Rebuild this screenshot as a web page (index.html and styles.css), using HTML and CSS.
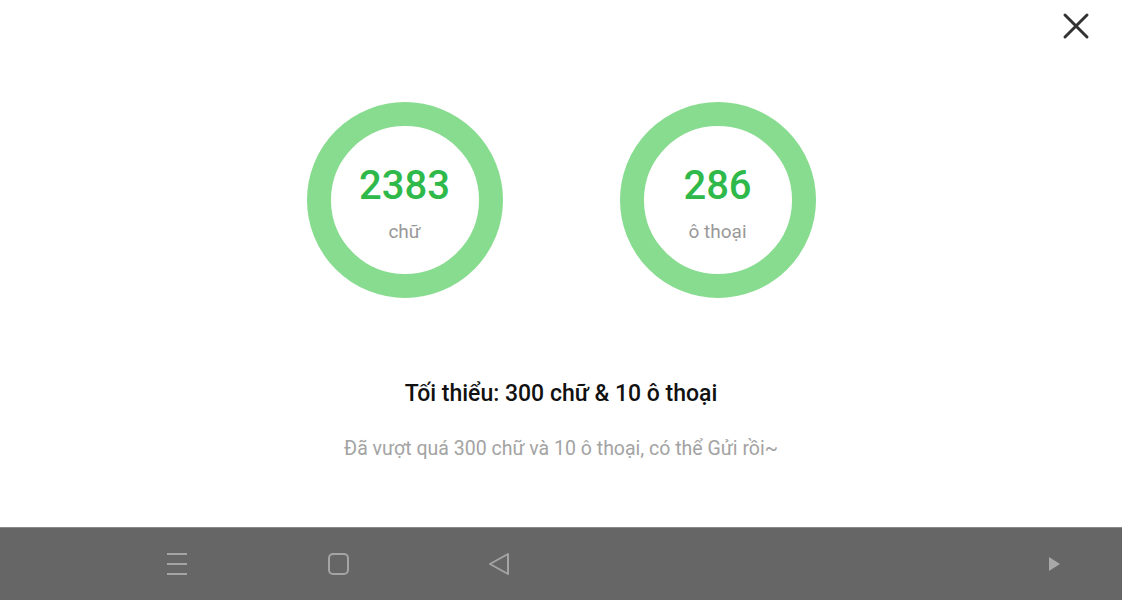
FILE: index.html
```html
<!DOCTYPE html>
<html lang="vi">
<head>
  <meta charset="UTF-8" />
  <title>Thống kê</title>
  <link rel="stylesheet" href="styles.css">
</head>
<body>
  <div class="sheet">
    <button class="close" aria-label="Đóng">
      <svg width="28" height="28" viewBox="0 0 28 28">
        <path d="M3 3 L25 25 M25 3 L3 25" stroke="#333" stroke-width="3" stroke-linecap="round" fill="none" />
      </svg>
    </button>

    <div class="stats">
      <div class="ring">
        <div class="num">2383</div>
        <div class="unit">chữ</div>
      </div>
      <div class="ring">
        <div class="num">286</div>
        <div class="unit">ô thoại</div>
      </div>
    </div>

    <div class="title">Tối thiểu: 300 chữ &amp; 10 ô thoại</div>
    <div class="hint">Đã vượt quá 300 chữ và 10 ô thoại, có thể Gửi rồi~</div>
  </div>

  <div class="navbar">
    <div class="nav-left">
      <svg class="nav-icon" width="24" height="24" viewBox="0 0 24 24">
        <path d="M2 2 H22 M2 12 H22 M2 22 H22" stroke="#a4a4a4" stroke-width="2" fill="none" />
      </svg>
      <svg class="nav-icon" width="24" height="24" viewBox="0 0 24 24">
        <rect x="3" y="2" width="19" height="20" rx="4" stroke="#a4a4a4" stroke-width="2" fill="none" />
      </svg>
      <svg class="nav-icon" width="24" height="24" viewBox="0 0 24 24">
        <path d="M21 2 L3 12 L21 22 Z" stroke="#a4a4a4" stroke-width="2" stroke-linejoin="round" fill="none" />
      </svg>
    </div>
    <svg class="nav-play" width="14" height="18" viewBox="0 0 14 18">
      <path d="M1 2 L12 9 L1 16 Z" fill="#a8a8a8" />
    </svg>
  </div>
</body>
</html>
```

FILE: styles.css
```css
body {
  margin: 0;
  font-family: Roboto, "Noto Sans", sans-serif;
  background: #ffffff;
}

.sheet {
  position: relative;
  height: 527px;
  box-sizing: border-box;
  padding-top: 102px;
  display: flex;
  flex-direction: column;
  align-items: center;
}

.close {
  position: absolute;
  top: 12px;
  right: 32px;
  padding: 0;
  border: none;
  background: none;
  cursor: pointer;
}

.close svg {
  display: block;
}

.stats {
  display: flex;
  gap: 117px;
}

.ring {
  width: 196px;
  height: 196px;
  box-sizing: border-box;
  border: 24px solid #88dc8f;
  border-radius: 50%;
  padding-top: 38px;
  display: flex;
  flex-direction: column;
  align-items: center;
}

.num {
  font-size: 40px;
  font-weight: 500;
  color: #2fb94a;
  line-height: 44px;
}

.unit {
  font-size: 19px;
  color: #999999;
  line-height: 24px;
  margin-top: 12px;
}

.title {
  margin-top: 82px;
  font-size: 23px;
  font-weight: 500;
  color: #111111;
  line-height: 28px;
}

.hint {
  margin-top: 29px;
  font-size: 19.5px;
  color: #a3a3a3;
  line-height: 24px;
}

.navbar {
  height: 73px;
  background: #666666;
  border-top: 1px solid #8a8a8a;
  box-sizing: border-box;
  display: flex;
  align-items: center;
  justify-content: space-between;
  padding: 0 60px 0 165px;
}

.nav-left {
  display: flex;
  gap: 137px;
}

.nav-icon {
  display: block;
}

.nav-play {
  display: block;
}
```
